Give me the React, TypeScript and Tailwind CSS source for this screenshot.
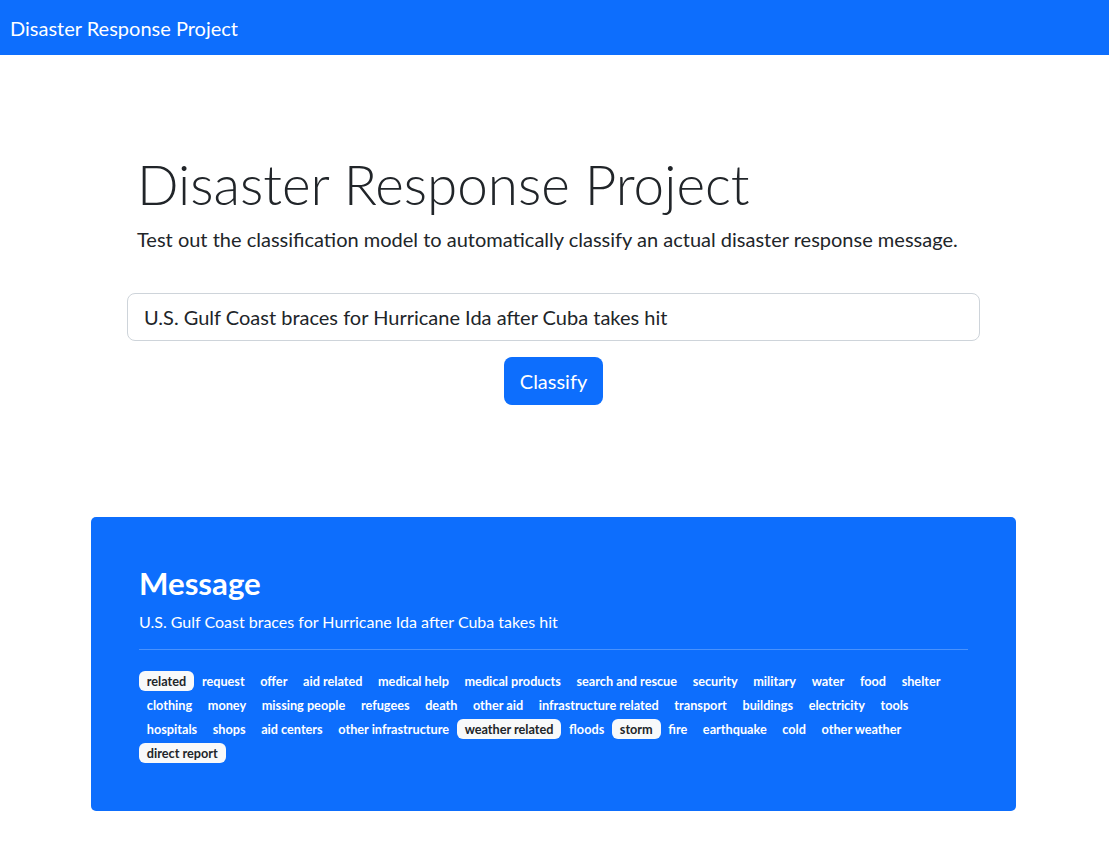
const rows: { t: string; on?: boolean }[][] = [
  [
    { t: "related", on: true },
    { t: "request" },
    { t: "offer" },
    { t: "aid related" },
    { t: "medical help" },
    { t: "medical products" },
    { t: "search and rescue" },
    { t: "security" },
    { t: "military" },
    { t: "water" },
    { t: "food" },
    { t: "shelter" },
  ],
  [
    { t: "clothing" },
    { t: "money" },
    { t: "missing people" },
    { t: "refugees" },
    { t: "death" },
    { t: "other aid" },
    { t: "infrastructure related" },
    { t: "transport" },
    { t: "buildings" },
    { t: "electricity" },
    { t: "tools" },
  ],
  [
    { t: "hospitals" },
    { t: "shops" },
    { t: "aid centers" },
    { t: "other infrastructure" },
    { t: "weather related", on: true },
    { t: "floods" },
    { t: "storm", on: true },
    { t: "fire" },
    { t: "earthquake" },
    { t: "cold" },
    { t: "other weather" },
  ],
  [{ t: "direct report", on: true }],
];

export default function App() {
  return (
    <div className="min-h-[841px] bg-white font-['Lato',sans-serif] text-[#212529]">
      <nav className="flex h-[55px] items-center bg-[#0d6efd] pl-[10px]">
        <span className="text-[20px] leading-[30px] text-white">Disaster Response Project</span>
      </nav>

      <div className="ml-[91px] w-[925px]">
        <div className="pl-[46px] pr-12 pt-[97px]">
          <h1 className="mb-2 text-[54.8px] font-light leading-[64px]">Disaster Response Project</h1>
          <p className="text-[20px] font-normal leading-[30px]">
            Test out the classification model to automatically classify an actual disaster response message.
          </p>
        </div>

        <div className="mt-[39px] flex flex-col items-center px-[36px]">
          <input
            readOnly
            value="U.S. Gulf Coast braces for Hurricane Ida after Cuba takes hit"
            className="h-[48px] w-full rounded-lg border border-[#ced4da] bg-white px-4 text-[20px] text-[#212529] outline-none"
          />
          <button className="mt-4 h-[48px] w-[99px] rounded-lg bg-[#0d6efd] text-[20px] text-white">Classify</button>
        </div>

        <div className="mt-[112px] rounded-[5px] bg-[#0d6efd] px-12 pb-[46px] pt-12 text-white">
          <h2 className="mb-2 text-[31.2px] font-bold leading-[37px]">Message</h2>
          <p className="text-[16px] leading-[24px]">U.S. Gulf Coast braces for Hurricane Ida after Cuba takes hit</p>
          <hr className="mb-4 mt-[15px] border-0 border-t border-white/25" />
          <div className="flex flex-col pt-[3px]">
            {rows.map((r, i) => (
              <div key={i} className="flex h-6 items-center">
                {r.map((b) => (
                  <span
                    key={b.t}
                    className={
                      b.on
                        ? "rounded-[6px] bg-[#f8f9fa] px-[7.8px] py-[4px] text-[12.7px] font-bold leading-[12px] text-[#212529]"
                        : "rounded-[6px] px-[7.8px] py-[4px] text-[12.7px] font-bold leading-[12px] text-white"
                    }
                  >
                    {b.t}
                  </span>
                ))}
              </div>
            ))}
          </div>
        </div>
      </div>
    </div>
  );
}
